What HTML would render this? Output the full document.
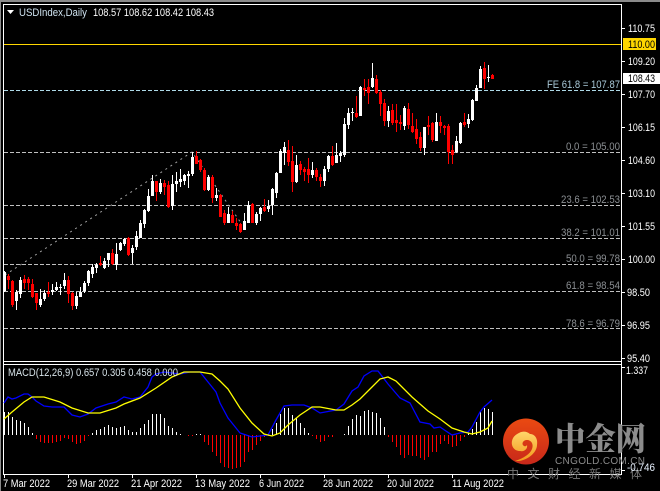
<!DOCTYPE html>
<html><head><meta charset="utf-8"><style>
html,body{margin:0;padding:0;background:#000;width:660px;height:491px;overflow:hidden}
svg{display:block}
text{font-family:"Liberation Sans","Noto Sans CJK SC",sans-serif;font-size:11px}
.a{fill:#fff}.g{fill:#8b8f93}
</style></head><body>
<svg width="660" height="491" viewBox="0 0 660 491" xmlns="http://www.w3.org/2000/svg">
<rect width="660" height="491" fill="#000"/>
<g shape-rendering="crispEdges" fill="none">
<path d="M0 1H660" stroke="#8a8a8a" stroke-width="2"/>
<path d="M.5 0V491" stroke="#8a8a8a"/>
<path d="M3 4.5H622M3.5 4V475M621.5 4V475M3 361.5H622M3 364.5H622M3 474.5H622" stroke="#fff"/>
<path d="M622 28.5h3M622 61.5h3M622 94.5h3M622 127.5h3M622 160.5h3M622 193.5h3M622 226.5h3M622 259.5h3M622 292.5h3M622 325.5h3M622 358.5h3M622 367.5h3M622 470.5h3" stroke="#fff"/>
<path d="M4.5 475v3M68.5 475v3M132.5 475v3M196.5 475v3M260.5 475v3M324.5 475v3M388.5 475v3M452.5 475v3" stroke="#fff"/>
<path d="M4 44.5H621" stroke="#ffd700"/>
<path d="M4 90.5H621" stroke="#add8e6" stroke-dasharray="4 2"/>
<path d="M4 152.5H621M4 205.5H621M4 238.5H621M4 264.5H621M4 291.5H621M4 328.5H621" stroke="#c0c0c0" stroke-dasharray="4 2"/>
</g>
<path d="M5 275L192 152L241 223" fill="none" stroke="#a0a0a0" stroke-width="1" stroke-dasharray="2 4"/>
<g shape-rendering="crispEdges" fill="none">
<path stroke="#fff" stroke-width="1" d="M4.5 271V292M16.5 290V310M20.5 277V298M40.5 289V307M44.5 290V301M52.5 284V295M56.5 282V291M60.5 284V295M64.5 273V289M76.5 292V309M80.5 287V297M84.5 281V293M88.5 270V286M92.5 264V278M96.5 263V273M104.5 258V269M108.5 253V267M116.5 243V270M120.5 242V251M124.5 238V246M132.5 245V264M136.5 231V250M140.5 220V238M144.5 209V228M148.5 189V212M152.5 175V196M160.5 179V194M172.5 175V210M176.5 172V192M180.5 169V187M184.5 174V185M188.5 171V188M192.5 152V176M208.5 175V191M216.5 188V201M228.5 207V223M244.5 213V230M248.5 201V223M256.5 212V225M260.5 207V221M268.5 200V212M272.5 188V215M276.5 172V198M280.5 149V173M284.5 142V165M296.5 155V183M312.5 162V178M324.5 166V186M328.5 155V172M336.5 143V163M340.5 151V162M344.5 118V157M348.5 108V129M352.5 108V121M360.5 86V116M372.5 63V88M388.5 106V127M404.5 106V130M424.5 127V155M436.5 113V141M456.5 136V153M460.5 122V144M468.5 114V128M472.5 99V121M476.5 85V101M480.5 66V88M488.5 65V82"/>
<path stroke="#fff" stroke-width="3" d="M4.5 272V291M16.5 292V301M20.5 280V294M40.5 299V305M44.5 293V299M52.5 290V292M56.5 287V290M60.5 287V288M64.5 280V286M76.5 296V306M80.5 292V297M84.5 283V291M88.5 271V283M92.5 267V274M96.5 265V268M104.5 261V268M108.5 253V260M116.5 254V265M120.5 243V250M124.5 239V244M132.5 248V253M136.5 236V247M140.5 223V238M144.5 210V224M148.5 196V211M152.5 181V196M160.5 183V192M172.5 184V206M176.5 181V184M180.5 179V182M184.5 175V181M188.5 174V176M192.5 157V174M208.5 177V190M216.5 195V198M228.5 214V223M244.5 221V230M248.5 205V223M256.5 214V223M260.5 208V214M268.5 206V209M272.5 189V205M276.5 173V193M280.5 151V173M284.5 147V153M296.5 165V182M312.5 170V175M324.5 169V181M328.5 156V169M336.5 155V163M340.5 153V156M344.5 124V155M348.5 113V125M352.5 112V113M360.5 87V116M372.5 78V87M388.5 111V121M404.5 108V126M424.5 127V148M436.5 122V141M456.5 141V152M460.5 123V143M468.5 119V124M472.5 100V120M476.5 88V101M480.5 69V88M488.5 77V78"/>
<path stroke="#f00" stroke-width="1" d="M8.5 274V289M12.5 280V307M24.5 275V289M28.5 277V290M32.5 279V298M36.5 293V310M48.5 282V297M68.5 276V303M72.5 292V310M100.5 256V266M112.5 249V265M128.5 237V256M156.5 181V201M164.5 180V195M168.5 181V208M196.5 151V164M200.5 159V172M204.5 168V191M212.5 175V203M220.5 194V217M224.5 210V225M232.5 211V223M236.5 218V230M240.5 223V233M252.5 203V223M264.5 199V212M288.5 140V166M292.5 146V192M300.5 161V175M304.5 167V181M308.5 158V183M316.5 168V181M320.5 174V187M332.5 146V166M356.5 96V118M364.5 79V96M368.5 79V104M376.5 75V94M380.5 90V116M384.5 99V126M392.5 104V125M396.5 104V132M400.5 115V130M408.5 103V129M412.5 113V133M416.5 119V144M420.5 132V151M428.5 116V135M432.5 122V142M440.5 116V133M444.5 125V135M448.5 124V164M452.5 145V164M464.5 113V127M484.5 62V89M492.5 74V79"/>
<path stroke="#f00" stroke-width="3" d="M8.5 276V280M12.5 281V305M24.5 279V283M28.5 279V283M32.5 284V297M36.5 293V303M48.5 292V294M68.5 280V294M72.5 293V306M100.5 263V265M112.5 253V264M128.5 238V255M156.5 181V192M164.5 183V187M168.5 185V207M196.5 156V164M200.5 160V170M204.5 170V190M212.5 177V198M220.5 195V217M224.5 213V223M232.5 215V223M236.5 223V226M240.5 224V232M252.5 204V223M264.5 207V211M288.5 150V162M292.5 161V182M300.5 164V170M304.5 169V172M308.5 169V175M316.5 170V177M320.5 177V181M332.5 156V165M356.5 113V117M364.5 88V90M368.5 87V93M376.5 79V93M380.5 92V104M384.5 103V121M392.5 110V123M396.5 120V123M400.5 122V124M408.5 109V125M412.5 126V132M416.5 129V139M420.5 137V148M428.5 125V127M432.5 123V140M440.5 122V126M444.5 126V128M448.5 126V152M452.5 150V155M464.5 122V125M484.5 68V79M492.5 75V79"/>
<path stroke="#fff" stroke-width="1" d="M4.5 435V412M8.5 435V412M12.5 435V417M16.5 435V420M20.5 435V421M24.5 435V423M28.5 435V427M32.5 435V433M92.5 435V433M96.5 435V430M100.5 435V429M104.5 435V427M108.5 435V425M112.5 435V427M116.5 435V428M120.5 435V427M124.5 435V426M128.5 435V430M132.5 435V432M136.5 435V432M140.5 435V428M144.5 435V424M148.5 435V420M152.5 435V414M156.5 435V414M160.5 435V414M164.5 435V418M168.5 435V426M172.5 435V428M176.5 435V432M180.5 435V434M196.5 435V434M200.5 435V434M272.5 435V429M276.5 435V423M280.5 435V414M284.5 435V408M288.5 435V408M292.5 435V415M296.5 435V418M300.5 435V423M304.5 435V428M308.5 435V433M344.5 435V434M348.5 435V426M352.5 435V419M356.5 435V415M360.5 435V416M364.5 435V411M368.5 435V410M372.5 435V412M376.5 435V413M380.5 435V418M384.5 435V427M468.5 435V433M472.5 435V429M476.5 435V422M480.5 435V412M484.5 435V408M488.5 435V409M492.5 435V412"/>
<path stroke="#f00" stroke-width="1" d="M36.5 435V439M40.5 435V442M44.5 435V443M48.5 435V443M52.5 435V443M56.5 435V442M60.5 435V441M64.5 435V438M68.5 435V439M72.5 435V442M76.5 435V444M80.5 435V443M84.5 435V441M88.5 435V436M188.5 435V436M192.5 435V436M204.5 435V442M208.5 435V445M212.5 435V452M216.5 435V456M220.5 435V463M224.5 435V467M228.5 435V468M232.5 435V469M236.5 435V468M240.5 435V467M244.5 435V462M248.5 435V452M252.5 435V450M256.5 435V445M260.5 435V441M264.5 435V437M268.5 435V436M312.5 435V436M316.5 435V439M320.5 435V442M324.5 435V441M328.5 435V437M332.5 435V437M388.5 435V437M392.5 435V442M396.5 435V447M400.5 435V455M404.5 435V458M408.5 435V455M412.5 435V456M416.5 435V456M420.5 435V458M424.5 435V460M428.5 435V457M432.5 435V452M436.5 435V452M440.5 435V444M444.5 435V441M448.5 435V444M452.5 435V447M456.5 435V446M460.5 435V441M464.5 435V437"/>
</g>
<path fill="none" stroke="#0000ff" stroke-width="1.3" d="M4 403L8 397L12 399L16 398L24 394L28 394L32 397L36 401L44 406L52 407L64 407L72 415L80 417L88 414L96 408L108 404L116 402L124 397L132 399L140 397L148 387L152 377L156 374L164 372L180 374L190 372L200 372L208 382L216 392L220 403L228 418L240 433L252 437L268 435L276 420L284 406L292 405L304 405L312 408L320 413L336 410L344 404L352 391L358 387L364 376L372 371L378 371L388 384L400 398L410 403L420 422L430 424L434 428L440 427L452 435L460 433L468 432L472 427L480 412L484 407L492 400"/>
<path fill="none" stroke="#ffff00" stroke-width="1.3" d="M4 419L12 412L24 402L32 397L44 397L60 402L72 408L88 413L100 413L116 408L124 404L140 398L156 388L172 377L184 372L200 372L212 374L220 381L228 389L240 408L252 423L264 434L272 436L280 433L288 425L300 415L312 407L320 407L336 410L344 410L352 405L360 399L372 387L380 379L388 377L396 381L412 397L428 411L440 419L452 428L464 432L472 434L480 432L488 428L492 421"/>

<rect x="623" y="38" width="33" height="12" fill="#ffd700"/>
<rect x="623" y="73" width="37" height="11" fill="#fff"/>
<path d="M7 10h7l-3.500 4z" fill="#fff"/>
<text x="19" y="16" fill="#cfe3f0" textLength="68" lengthAdjust="spacingAndGlyphs">USDIndex,Daily</text>
<text x="93" y="16" class="a" textLength="121" lengthAdjust="spacingAndGlyphs">108.57 108.62 108.42 108.43</text>
<text x="547" y="88" fill="#a9c9d8" textLength="73" lengthAdjust="spacingAndGlyphs">FE 61.8 = 107.87</text>
<text x="566" y="150" class="g" textLength="54" lengthAdjust="spacingAndGlyphs">0.0 = 105.00</text>
<text x="561" y="203" class="g" textLength="59" lengthAdjust="spacingAndGlyphs">23.6 = 102.53</text>
<text x="561" y="236" class="g" textLength="59" lengthAdjust="spacingAndGlyphs">38.2 = 101.01</text>
<text x="566" y="262" class="g" textLength="54" lengthAdjust="spacingAndGlyphs">50.0 = 99.78</text>
<text x="566" y="289" class="g" textLength="54" lengthAdjust="spacingAndGlyphs">61.8 = 98.54</text>
<text x="566" y="327" class="g" textLength="54" lengthAdjust="spacingAndGlyphs">78.6 = 96.79</text>
<g class="a">
<text x="628" y="32" class="a" textLength="27" lengthAdjust="spacingAndGlyphs">110.75</text>
<text x="628" y="48" fill="#000" textLength="27" lengthAdjust="spacingAndGlyphs">110.00</text>
<text x="628" y="65" class="a" textLength="27" lengthAdjust="spacingAndGlyphs">109.20</text>
<text x="628" y="82" fill="#000" textLength="27" lengthAdjust="spacingAndGlyphs">108.43</text>
<text x="628" y="98" class="a" textLength="27" lengthAdjust="spacingAndGlyphs">107.70</text>
<text x="628" y="131" class="a" textLength="27" lengthAdjust="spacingAndGlyphs">106.15</text>
<text x="628" y="164" class="a" textLength="27" lengthAdjust="spacingAndGlyphs">104.60</text>
<text x="628" y="197" class="a" textLength="27" lengthAdjust="spacingAndGlyphs">103.10</text>
<text x="628" y="230" class="a" textLength="27" lengthAdjust="spacingAndGlyphs">101.55</text>
<text x="628" y="263" class="a" textLength="27" lengthAdjust="spacingAndGlyphs">100.00</text>
<text x="627" y="296" class="a" textLength="23" lengthAdjust="spacingAndGlyphs">98.50</text>
<text x="627" y="329" class="a" textLength="23" lengthAdjust="spacingAndGlyphs">96.95</text>
<text x="627" y="362" class="a" textLength="23" lengthAdjust="spacingAndGlyphs">95.40</text>
<text x="626" y="374" class="a" textLength="22" lengthAdjust="spacingAndGlyphs">1.337</text>
</g>
<text x="8" y="376" fill="#d8e4ea" textLength="170" lengthAdjust="spacingAndGlyphs">MACD(12,26,9) 0.657 0.305 0.458 0.000</text>
<g>
<text x="3" y="487" class="a" textLength="47" lengthAdjust="spacingAndGlyphs">7 Mar 2022</text>
<text x="67" y="487" class="a" textLength="52" lengthAdjust="spacingAndGlyphs">29 Mar 2022</text>
<text x="131" y="487" class="a" textLength="51" lengthAdjust="spacingAndGlyphs">21 Apr 2022</text>
<text x="195" y="487" class="a" textLength="55" lengthAdjust="spacingAndGlyphs">13 May 2022</text>
<text x="259" y="487" class="a" textLength="45" lengthAdjust="spacingAndGlyphs">6 Jun 2022</text>
<text x="323" y="487" class="a" textLength="50" lengthAdjust="spacingAndGlyphs">28 Jun 2022</text>
<text x="387" y="487" class="a" textLength="47" lengthAdjust="spacingAndGlyphs">20 Jul 2022</text>
<text x="452" y="487" class="a" textLength="52" lengthAdjust="spacingAndGlyphs">11 Aug 2022</text>
</g>
<defs>
<linearGradient id="c" x1="0" y1="0" x2="0" y2="1"><stop offset="0" stop-color="#ea4a12"/><stop offset="1" stop-color="#c8281a"/></linearGradient>
<linearGradient id="s" x1="0" y1="0" x2="0" y2="1"><stop offset="0" stop-color="#ffd56a"/><stop offset="1" stop-color="#f29a1c"/></linearGradient>
</defs>
<circle cx="526" cy="441.5" r="23" fill="url(#c)"/>
<path fill="url(#s)" d="M515 461C524 458 530 454 532 449C534 444 531 440 527 440C523 440 521 444 524 446C526 447 527 445 527 445C528 449 524 452 520 451C514 451 511 446 512 441C513 436 517 434 519 433C522 431 527 431 530 434C535 434 538 439 537 445C537 453 526 462 515 461Z"/>
<text x="555" y="450" fill="#8c8c8c" style="font-family:'Noto Serif CJK SC','Noto Sans CJK SC',serif;font-size:32px;font-weight:900" textLength="91" lengthAdjust="spacingAndGlyphs">中金网</text>
<text x="555" y="464" fill="#8a8a8a" style="font-size:10px" textLength="90" lengthAdjust="spacing">CNGOLD.COM.CN</text>
<text y="478" fill="#787878" style="font-size:12px" x="507 527.5 548 568.5 589 609.5 630">中文财经新媒体</text>
<text x="627" y="471" fill="#e8f2ff" textLength="28" lengthAdjust="spacingAndGlyphs">-0.746</text>
</svg>
</body></html>
